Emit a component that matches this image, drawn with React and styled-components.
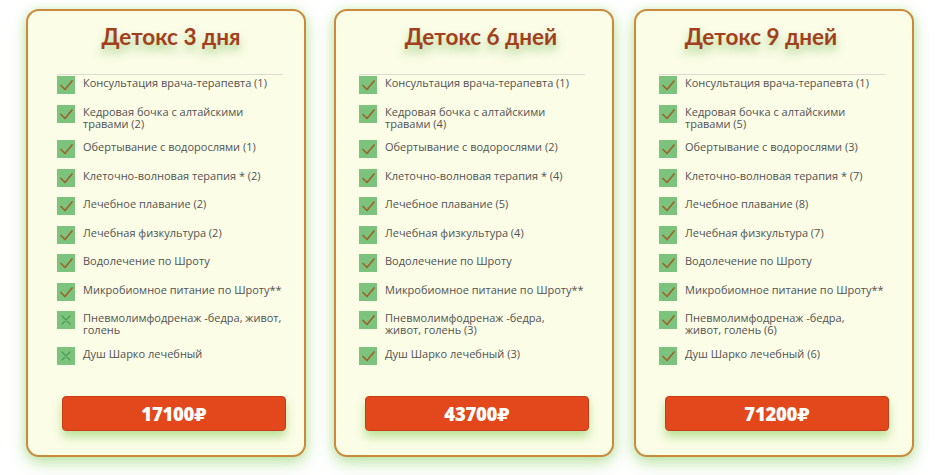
import React from "react";
import styled, { createGlobalStyle } from "styled-components";

const Global = createGlobalStyle`
  html, body { margin: 0; padding: 0; background: #ffffff; }
  body { font-family: "Open Sans", "Noto Sans", sans-serif; }
`;

const Page = styled.div`
  display: flex;
  align-items: flex-start;
  padding: 9px 0 0 26px;
  width: 944px;
  height: 475px;
  box-sizing: border-box;
`;

const Card = styled.div`
  box-sizing: border-box;
  width: 280px;
  height: 448px;
  margin-left: ${(p) => p.$gap}px;
  padding: 12px 0 24px ${(p) => p.$offset}px;
  display: flex;
  flex-direction: column;
  background: #fbfde7;
  border: 2px solid #c98a3b;
  border-radius: 13px;
  box-shadow: 0 6px 16px rgba(120, 200, 70, 0.45), 0 0 8px rgba(150, 210, 110, 0.25);
`;

const Title = styled.h2`
  margin: 0;
  width: 226px;
  box-sizing: border-box;
  padding-left: ${(p) => Math.max(0, p.$shift * 2)}px;
  padding-right: ${(p) => Math.max(0, -p.$shift * 2)}px;
  text-align: center;
  font-family: "Lato", "Open Sans", sans-serif;
  font-weight: 700;
  font-size: 22.5px;
  line-height: 28px;
  color: #a33f1d;
  text-shadow: 0 6px 9px rgba(90, 170, 60, 0.5);
`;

const List = styled.ul`
  list-style: none;
  margin: 23px 0 0 0;
  padding: 1px 0 0 0;
  width: 226px;
  border-top: 1px solid #dcdcd0;
  display: flex;
  flex-direction: column;
  gap: 10.5px;
`;

const Item = styled.li`
  display: flex;
  align-items: flex-start;
  gap: 8px;
`;

const Box = styled.span`
  flex: none;
  width: 18px;
  height: 18px;
  background: #7cc37d;
  display: flex;
  align-items: center;
  justify-content: center;
`;

const Label = styled.span`
  font-size: 11px;
  line-height: 12px;
  color: #525252;
  white-space: pre-line;
  padding-top: 1px;
`;

const Price = styled.div`
  margin: auto 0 0 ${(p) => p.$shift}px;
  width: 224px;
  height: 35px;
  box-sizing: border-box;
  background: #e2481b;
  border: 1px solid #c53c16;
  border-radius: 4px;
  display: flex;
  align-items: center;
  justify-content: center;
  color: #ffffff;
  font-family: "Open Sans", "DejaVu Sans", sans-serif;
  font-weight: 800;
  font-size: 18.5px;
  letter-spacing: -0.3px;
  box-shadow: 0 6px 10px rgba(110, 190, 60, 0.45);
`;

const Check = () => (
  <svg width="18" height="18" viewBox="0 0 18 18">
    <path d="M4 9.5 L8 13.5 L15 5" fill="none" stroke="#9c662b" strokeWidth="1.7" strokeLinecap="round" strokeLinejoin="round" />
  </svg>
);

const Cross = () => (
  <svg width="18" height="18" viewBox="0 0 18 18">
    <path d="M5 5 L13 13 M13 5 L5 13" fill="none" stroke="#4e9a57" strokeWidth="1.2" strokeLinecap="round" />
  </svg>
);

const cards = [
  {
    title: "Детокс 3 дня",
    price: "17100₽",
    gap: 0,
    offset: 29,
    shift: 1,
    btn: 5,
    items: [
      ["Консультация врача-терапевта (1)", true],
      ["Кедровая бочка с алтайскими\nтравами (2)", true],
      ["Обертывание с водорослями (1)", true],
      ["Клеточно-волновая терапия * (2)", true],
      ["Лечебное плавание (2)", true],
      ["Лечебная физкультура (2)", true],
      ["Водолечение по Шроту", true],
      ["Микробиомное питание по Шроту**", true],
      ["Пневмолимфодренаж -бедра, живот,\nголень", false],
      ["Душ Шарко лечебный", false],
    ],
  },
  {
    title: "Детокс 6 дней",
    price: "43700₽",
    gap: 28,
    offset: 23,
    shift: 9,
    btn: 6,
    items: [
      ["Консультация врача-терапевта (1)", true],
      ["Кедровая бочка с алтайскими\nтравами (4)", true],
      ["Обертывание с водорослями (2)", true],
      ["Клеточно-волновая терапия * (4)", true],
      ["Лечебное плавание (5)", true],
      ["Лечебная физкультура (4)", true],
      ["Водолечение по Шроту", true],
      ["Микробиомное питание по Шроту**", true],
      ["Пневмолимфодренаж -бедра,\nживот, голень (3)", true],
      ["Душ Шарко лечебный (3)", true],
    ],
  },
  {
    title: "Детокс 9 дней",
    price: "71200₽",
    gap: 20,
    offset: 23,
    shift: -11,
    btn: 6,
    items: [
      ["Консультация врача-терапевта (1)", true],
      ["Кедровая бочка с алтайскими\nтравами (5)", true],
      ["Обертывание с водорослями (3)", true],
      ["Клеточно-волновая терапия * (7)", true],
      ["Лечебное плавание (8)", true],
      ["Лечебная физкультура (7)", true],
      ["Водолечение по Шроту", true],
      ["Микробиомное питание по Шроту**", true],
      ["Пневмолимфодренаж -бедра,\nживот, голень (6)", true],
      ["Душ Шарко лечебный (6)", true],
    ],
  },
];

export default function App() {
  return (
    <>
      <Global />
      <Page>
        {cards.map((c) => (
          <Card key={c.title} $gap={c.gap} $offset={c.offset}>
            <Title $shift={c.shift}>{c.title}</Title>
            <List>
              {c.items.map(([text, ok]) => (
                <Item key={text}>
                  <Box>{ok ? <Check /> : <Cross />}</Box>
                  <Label>{text}</Label>
                </Item>
              ))}
            </List>
            <Price $shift={c.btn}>{c.price}</Price>
          </Card>
        ))}
      </Page>
    </>
  );
}
